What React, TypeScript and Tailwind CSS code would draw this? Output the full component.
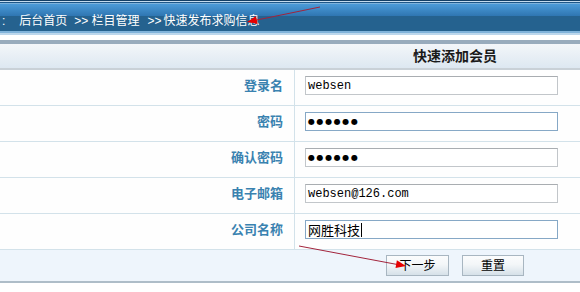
import React from "react";

const font = "font-['Liberation_Sans','Noto_Sans_CJK_SC',sans-serif]";

type Field = { label: string; value: string; kind: "mono" | "dots" | "cjk"; focus?: boolean };

const fields: Field[] = [
  { label: "登录名", value: "websen", kind: "mono" },
  { label: "密码", value: "●●●●●●", kind: "dots", focus: true },
  { label: "确认密码", value: "●●●●●●", kind: "dots" },
  { label: "电子邮箱", value: "websen@126.com", kind: "mono" },
  { label: "公司名称", value: "网胜科技", kind: "cjk", focus: true },
];

function Row({ f }: { f: Field }) {
  const textCls =
    f.kind === "mono"
      ? "font-['Liberation_Mono',monospace] text-[12px]"
      : f.kind === "dots"
      ? "font-['DejaVu_Sans',sans-serif] text-[8px] tracking-[1.6px]"
      : "font-['Noto_Sans_CJK_SC',sans-serif] text-[13px]";
  return (
    <div className="flex h-[36px] border-b border-[#d3e2ea] bg-[#fefefe]">
      <div className="w-[295px] border-r border-[#d3e2ea] pr-[11px] pt-[6px] flex justify-end">
        <span className="h-[19px] flex items-center text-[13px] font-bold text-[#3a82b0]">{f.label}</span>
      </div>
      <div className="pl-[10px] pt-[6px]">
        <div
          className={`w-[253px] h-[19px] bg-white border flex items-center px-[2px] text-black leading-none ${
            f.focus ? "border-[#86a8c6]" : "border-[#c2c6ca] border-t-[#a9adb1]"
          } ${textCls}`}
        >
          {f.value}
          {f.kind === "cjk" && <span className="w-[1px] h-[14px] bg-black ml-[1px]" />}
        </div>
      </div>
    </div>
  );
}

function Btn({ children, w }: { children: React.ReactNode; w: string }) {
  return (
    <button
      className={`${w} h-[21px] border border-[#a8b6c1] bg-[linear-gradient(#fbfcfd_0%,#f3f6f8_45%,#d6e1e9_100%)] text-[12px] text-black flex items-center justify-center`}
    >
      {children}
    </button>
  );
}

export default function App() {
  return (
    <div className={`relative w-[580px] h-[292px] overflow-hidden bg-white ${font}`}>
      <div className="w-[910px]">
        {/* 顶部导航条 */}
        <div className="h-[1px] bg-[#123f66]" />
        <div className="h-[1px] bg-[#c4dcee]" />
        <div className="h-[1px] bg-[#1d5788]" />
        <div className="h-[1px] bg-[#7cb2dc]" />
        <div className="h-[27px] bg-[linear-gradient(#4b9bd8_0px,#2f76b2_12px,#25628f_12px,#25628f_100%)] pt-[7px] flex items-center text-white text-[12px]">
          <div className="flex items-center h-[20px]">
            <span className="ml-[2px]">:</span>
            <span className="ml-[14px]">后台首页</span>
            <span className="ml-[7px]">&gt;&gt;</span>
            <span className="ml-[3px]">栏目管理</span>
            <span className="ml-[8px]">&gt;&gt;</span>
            <span className="ml-[2px]">快速发布求购信息</span>
          </div>
        </div>
        <div className="h-[2px] bg-[#80b3da]" />
        <div className="h-[2px] bg-[#bcd7ec]" />
        <div className="h-[5px] bg-white" />
        <div className="h-[4px] bg-[#98abbc]" />
        <div className="h-[26px] border-b-2 border-[#c9d1d7] bg-[linear-gradient(#f3f6f9,#dde8f1)] flex items-center justify-center">
          <span className="text-[14px] font-bold text-[#1a1a1a]">快速添加会员</span>
        </div>

        {fields.map((f) => (
          <Row key={f.label} f={f} />
        ))}

        <div className="h-[33px] bg-[#eef5fc] border-b-2 border-[#aebdc8] flex items-center justify-center gap-[13px]">
          <Btn w="w-[63px]">下一步</Btn>
          <Btn w="w-[62px]">重置</Btn>
        </div>
      </div>

      {/* 红色标注箭头 */}
      <svg className="absolute inset-0 pointer-events-none" width="580" height="292" viewBox="0 0 580 292">
        <line x1="320" y1="7" x2="252" y2="21" stroke="#a2243c" strokeWidth="1" />
        <polygon points="247,22 257.6,23.9 256,16.1" fill="#e60000" />
        <line x1="299" y1="246" x2="400" y2="265" stroke="#a2243c" strokeWidth="1" />
        <polygon points="406,266 395.5,268.1 396.9,260.3" fill="#e60000" />
      </svg>
    </div>
  );
}
